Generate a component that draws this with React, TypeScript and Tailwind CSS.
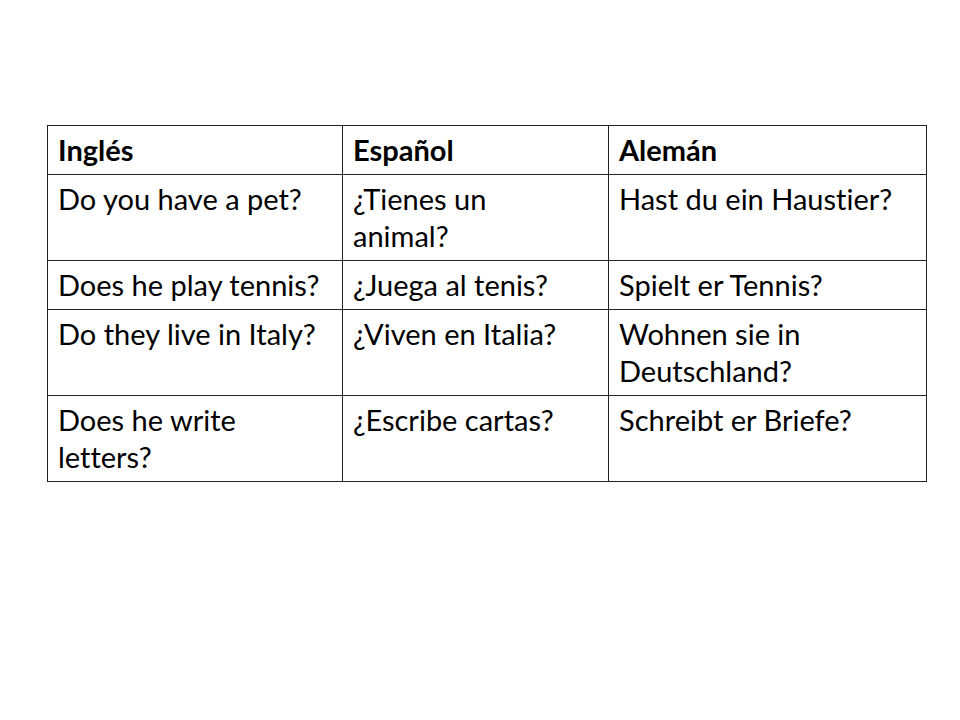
const rows: [string[], string[], string[]][] = [
  [['Do you have a pet?'], ['¿Tienes un', 'animal?'], ['Hast du ein Haustier?']],
  [['Does he play tennis?'], ['¿Juega al tenis?'], ['Spielt er Tennis?']],
  [['Do they live in Italy?'], ['¿Viven en Italia?'], ['Wohnen sie in', 'Deutschland?']],
  [['Does he write', 'letters?'], ['¿Escribe cartas?'], ['Schreibt er Briefe?']],
];

function Lines({ lines }: { lines: string[] }) {
  return (
    <>
      {lines.map((line, i) => (
        <span key={i} className="block whitespace-nowrap">
          {line}
        </span>
      ))}
    </>
  );
}

export default function App() {
  return (
    <div
      className="h-[720px] w-[960px] bg-white pl-[47px] pt-[125px] text-black"
      style={{ fontFamily: 'Lato, "Open Sans", sans-serif' }}
    >
      <table className="w-[879px] table-fixed border-collapse text-[29px] leading-[37px] [font-variant-ligatures:none]">
        <colgroup>
          <col className="w-[295px]" />
          <col className="w-[266px]" />
          <col className="w-[318px]" />
        </colgroup>
        <thead>
          <tr>
            {['Inglés', 'Español', 'Alemán'].map((h) => (
              <th
                key={h}
                className="border border-[#222] px-[10px] pb-[6px] pt-[5px] text-left align-top font-bold"
              >
                {h}
              </th>
            ))}
          </tr>
        </thead>
        <tbody>
          {rows.map((row, r) => (
            <tr key={r}>
              {row.map((cell, c) => (
                <td
                  key={c}
                  className="border border-[#222] px-[10px] pb-[6px] pt-[5px] align-top"
                >
                  <Lines lines={cell} />
                </td>
              ))}
            </tr>
          ))}
        </tbody>
      </table>
    </div>
  );
}
